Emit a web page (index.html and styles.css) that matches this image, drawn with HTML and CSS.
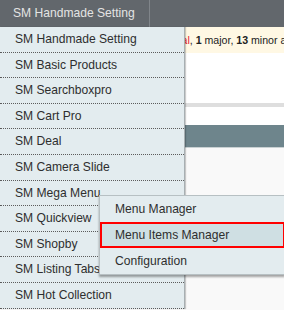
FILE: index.html
```html
<!DOCTYPE html>
<html lang="en">

<head>
  <meta charset="UTF-8" />
  <title>SM Handmade Setting</title>
  <link rel="stylesheet" href="styles.css">
</head>

<body>
  <div class="topbar">
    <div class="tab">SM Handmade Setting</div>
  </div>

  <div class="page">
    <div class="notice">
      There are 1 critic<span class="crit">al</span>, <b>1</b> major, <b>13</b> minor and <b>22</b> notice unread message(s).
    </div>
    <div class="gap-a"></div>
    <div class="rule"></div>
    <div class="gap-b"></div>
    <div class="head"></div>
    <div class="body-area"></div>
  </div>

  <ul class="dropdown">
    <li>SM Handmade Setting</li>
    <li>SM Basic Products</li>
    <li>SM Searchboxpro</li>
    <li>SM Cart Pro</li>
    <li>SM Deal</li>
    <li>SM Camera Slide</li>
    <li class="has-sub">SM Mega Menu
      <ul class="submenu">
        <li>Menu Manager</li>
        <li class="active">Menu Items Manager</li>
        <li>Configuration</li>
      </ul>
    </li>
    <li>SM Quickview</li>
    <li>SM Shopby</li>
    <li>SM Listing Tabs</li>
    <li>SM Hot Collection</li>
  </ul>
</body>

</html>
```

FILE: styles.css
```css
body {
  margin: 0;
  font-family: 'Liberation Sans', Arial, sans-serif;
  font-size: 12.1px;
  color: #2e2e2e;
  background: #f9f9f9;
  overflow: hidden;
  position: relative;
  height: 310px;
}

.topbar {
  height: 27px;
  background: #62676c;
  display: flex;
}

.tab {
  width: 136px;
  padding-left: 13px;
  line-height: 27px;
  color: #e4e4e4;
  border-right: 1px solid #80858a;
}

.page {
  display: flex;
  flex-direction: column;
  height: 283px;
}

.notice {
  height: 26px;
  line-height: 26px;
  font-size: 10.6px;
  background: #fff8e4;
  white-space: nowrap;
  overflow: hidden;
  padding-left: 102px;
  color: #222;
}

.crit {
  color: #e3202f;
}

.gap-a {
  height: 50px;
  background: #fff;
}

.rule {
  height: 4px;
  background: #dedede;
}

.gap-b {
  height: 18px;
  background: #fff;
}

.head {
  height: 22px;
  background: #6e858c;
  border-bottom: 1px solid #c9d1d3;
}

.body-area {
  flex: 1;
  background: #f9f9f9;
}

ul {
  list-style: none;
  margin: 0;
  padding: 0;
}

.dropdown {
  position: absolute;
  top: 27px;
  left: 0;
  width: 184px;
  background: #e3ecef;
  border-right: 1px solid #a7afb2;
  box-shadow: 1px 0 1px rgba(0, 0, 0, 0.2);
}

.dropdown > li {
  height: 24.6px;
  line-height: 25px;
  padding-left: 15px;
  border-bottom: 1px dotted #5c5c5c;
  white-space: nowrap;
  position: relative;
}

.submenu {
  position: absolute;
  top: 14px;
  left: 99px;
  width: 185px;
  background: #e3ecef;
  border: 1px solid #b7c0c3;
  border-right: 0;
  box-shadow: 0 2px 2px rgba(0, 0, 0, 0.35);
  z-index: 2;
}

.submenu li {
  height: 26px;
  line-height: 26px;
  padding-left: 15px;
}

.submenu li.active {
  background: #cfdfe3;
  outline: 2px solid #f00;
  outline-offset: -2px;
}
```
